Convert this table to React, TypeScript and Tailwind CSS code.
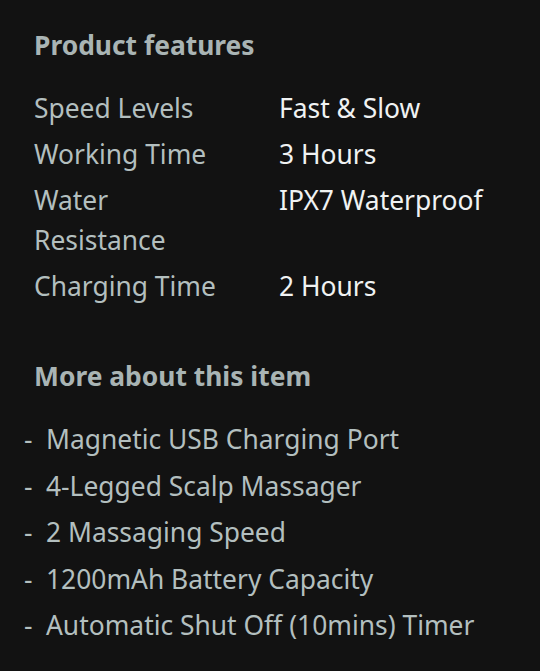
import React from "react";

const rows: [string, string][] = [
  ["Speed Levels", "Fast & Slow"],
  ["Working Time", "3 Hours"],
  ["Water Resistance", "IPX7 Waterproof"],
  ["Charging Time", "2 Hours"],
];

const items = [
  "Magnetic USB Charging Port",
  "4-Legged Scalp Massager",
  "2 Massaging Speed",
  "1200mAh Battery Capacity",
  "Automatic Shut Off (10mins) Timer",
];

export default function App() {
  return (
    <div
      className="w-[540px] h-[671px] bg-[#121212] overflow-hidden"
      style={{ fontFamily: '"Noto Sans", "Open Sans", sans-serif' }}
    >
      <div className="pl-[34px] pt-[25px]">
        <h2 className="text-[26.4px] leading-[40px] font-bold text-[#a9b4b4]">Product features</h2>
        <div className="mt-[23px] flex flex-col gap-[6px]">
          {rows.map(([k, v]) => (
            <div key={k} className="flex text-[26.4px] leading-[40px]">
              <div className="w-[245px] pr-[60px] text-[#b3bfbf]">{k}</div>
              <div className="text-[#f0f2f2]">{v}</div>
            </div>
          ))}
        </div>
        <h2 className="mt-[50px] text-[26.4px] leading-[40px] font-bold text-[#a9b4b4]">More about this item</h2>
      </div>
      <ul className="mt-[23px] pl-[24px] flex flex-col gap-[6.5px]">
        {items.map((t) => (
          <li key={t} className="flex text-[26.4px] leading-[40px] text-[#b3bfbf]">
            <span className="w-[22px]">-</span>
            <span>{t}</span>
          </li>
        ))}
      </ul>
    </div>
  );
}
